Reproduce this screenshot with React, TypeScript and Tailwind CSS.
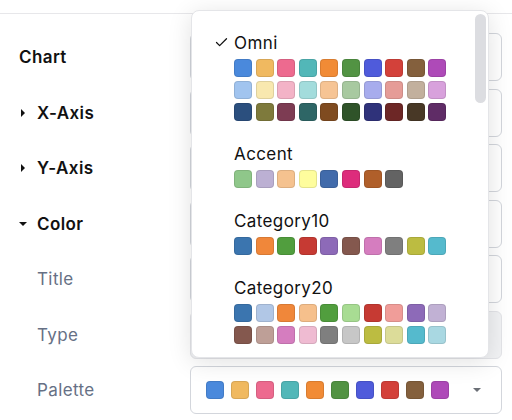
import React from 'react';
import { Check } from 'lucide-react';

const omni = [
  ['#4a89dc', '#f0b960', '#ed6a8f', '#52b7b8', '#f18b36', '#529343', '#4f5bdb', '#d3413a', '#84603d', '#ae4ab8'],
  ['#a1c4ef', '#f8e8af', '#f3b3c7', '#a3dcdc', '#f6c494', '#a8c9a0', '#a7aced', '#e59c97', '#c2b09d', '#d8a1dc'],
  ['#2b4f7e', '#7e7a3c', '#7d3c53', '#2e6666', '#7f4b20', '#2f5329', '#2f327a', '#6d2726', '#483826', '#5f2c66'],
];

const palettes: { name: string; rows: string[][]; selected?: boolean }[] = [
  { name: 'Omni', rows: omni, selected: true },
  { name: 'Accent', rows: [['#8fc78a', '#bcb0d3', '#f5c28f', '#fefd9d', '#416bab', '#dd2c7c', '#b05f2a', '#636363']] },
  {
    name: 'Category10',
    rows: [['#3b75af', '#f0873a', '#519e3e', '#c63a33', '#8d6ab8', '#84584e', '#d57dbf', '#7f7f7f', '#bcbc41', '#55bacd']],
  },
  {
    name: 'Category20',
    rows: [
      ['#3b75af', '#b1c7e6', '#f0873a', '#f6c08c', '#519e3e', '#a8dc93', '#c63a33', '#f09d99', '#8d6ab8', '#c1b1d4'],
      ['#84584e', '#be9f97', '#d57dbf', '#efbbd2', '#7f7f7f', '#c7c7c7', '#bcbc41', '#dcdc99', '#55bacd', '#a9d8e2'],
    ],
  },
];

const rows = [
  { label: 'Chart', kind: 'header' },
  { label: 'X-Axis', kind: 'closed' },
  { label: 'Y-Axis', kind: 'closed' },
  { label: 'Color', kind: 'open' },
  { label: 'Title', kind: 'field' },
  { label: 'Type', kind: 'disabled' },
];

const Swatch = ({ color }: { color: string }) => (
  <div className="w-[18px] h-[18px] shrink-0 rounded-[4px] border border-black/10" style={{ backgroundColor: color }} />
);

export default function App() {
  return (
    <div
      className="relative w-[512px] h-[420px] overflow-hidden bg-white text-[17px] tracking-[0.4px] leading-[22px]"
      style={{ fontFamily: 'Inter, "Noto Sans", sans-serif' }}
    >
      <div className="h-[14px] border-b border-[#e7e7ea]" />

      <div className="grid grid-cols-[190px_1fr] gap-y-[7.5px] pr-[10px] pt-[19px]">
        {rows.map((r) => (
          <React.Fragment key={r.label}>
            <div className="flex items-center h-12 pl-[19px]">
              {r.kind === 'header' && <span className="font-semibold text-[#111]">{r.label}</span>}
              {r.kind === 'closed' && (
                <>
                  <span className="w-[18px] flex items-center">
                    <span className="block w-0 h-0 border-y-[4px] border-y-transparent border-l-[4px] border-l-[#111] ml-[2px]" />
                  </span>
                  <span className="font-semibold text-[#111]">{r.label}</span>
                </>
              )}
              {r.kind === 'open' && (
                <>
                  <span className="w-[18px] flex items-center">
                    <span className="block w-0 h-0 border-x-[4px] border-x-transparent border-t-[4px] border-t-[#111]" />
                  </span>
                  <span className="font-semibold text-[#111]">{r.label}</span>
                </>
              )}
              {(r.kind === 'field' || r.kind === 'disabled') && (
                <span className="pl-[18px] text-[#667085]">{r.label}</span>
              )}
            </div>
            <div
              className={`h-12 rounded-md border ${
                r.kind === 'disabled' ? 'border-[#e3e4e8] bg-[#f1f2f4]' : 'border-[#d3d6dc] bg-white'
              }`}
            />
          </React.Fragment>
        ))}

        <div className="flex items-center h-12 pl-[37px] text-[#667085]">Palette</div>
        <div className="h-12 rounded-md border border-[#d3d6dc] bg-white flex items-center pl-[15px] pr-[20px]">
          <div className="flex gap-[7px]">
            {omni[0].map((c) => (
              <Swatch key={c} color={c} />
            ))}
          </div>
          <span className="ml-auto block w-0 h-0 border-x-[4px] border-x-transparent border-t-[4px] border-t-[#6b6f76]" />
        </div>
      </div>

      {/* palette dropdown */}
      <div className="absolute left-[191px] top-[10px] w-[298px] h-[348px] rounded-lg border border-[#e4e5e8] bg-white overflow-hidden shadow-[0_4px_24px_rgba(0,0,0,0.12)]">
        <div className="pt-[10px]">
          {palettes.map((p) => (
            <div key={p.name} className="relative py-[11px] pl-[42px]">
              {p.selected && (
                <Check size={15} strokeWidth={2} className="absolute left-[22px] top-[14px] text-[#111]" />
              )}
              <div className="text-[#111]">{p.name}</div>
              <div className="mt-[5px] flex flex-col gap-1">
                {p.rows.map((row, i) => (
                  <div key={i} className="flex gap-[3.6px]">
                    {row.map((c, j) => (
                      <Swatch key={j} color={c} />
                    ))}
                  </div>
                ))}
              </div>
            </div>
          ))}
        </div>
        <div className="absolute right-[2px] top-[3px] w-[11px] h-[89px] rounded-full bg-[#dcdde1]" />
      </div>
    </div>
  );
}
